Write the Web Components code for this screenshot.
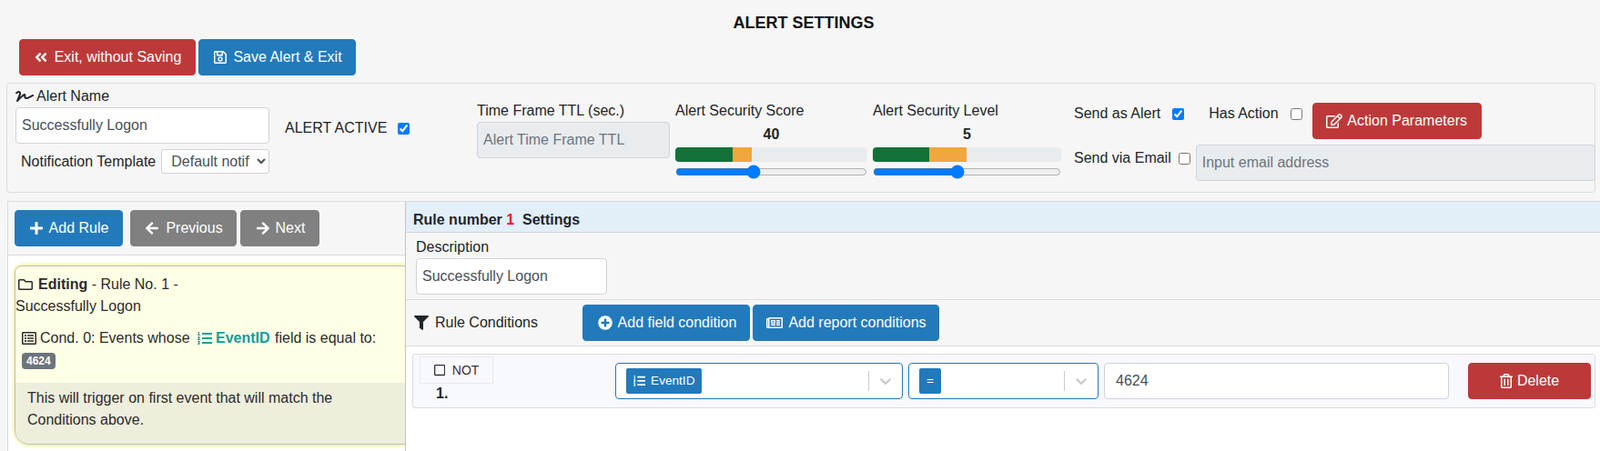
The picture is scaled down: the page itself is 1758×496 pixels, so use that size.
<!DOCTYPE html>
<html lang="en">
<head>
<meta charset="utf-8">
<title>Alert Settings</title>
<style>
html,body{margin:0;padding:0;background:#f6f6f6;}
body{font:16px/24px "Liberation Sans",Arial,sans-serif;color:#212529;width:1758px;height:496px;overflow:hidden;}
</style>
</head>
<body>
<alert-page></alert-page>

<script>
const ICONS = {
  dbl:[448,"M223.7 239l136-136c9.4-9.4 24.6-9.4 33.9 0l22.6 22.6c9.4 9.4 9.4 24.6 0 33.9L319.9 256l96.4 96.4c9.4 9.4 9.4 24.6 0 33.9L393.7 409c-9.4 9.4-24.6 9.4-33.9 0l-136-136c-9.5-9.4-9.5-24.6-.1-34zm-192 34l136 136c9.4 9.4 24.6 9.4 33.9 0l22.6-22.6c9.4-9.4 9.4-24.6 0-33.9L127.9 256l96.4-96.4c9.4-9.4 9.4-24.6 0-33.9L201.7 103c-9.4-9.4-24.6-9.4-33.9 0l-136 136c-9.5 9.4-9.5 24.6-.1 34z"],
  save:[448,"M433.941 129.941l-83.882-83.882A48 48 0 0 0 316.118 32H48C21.49 32 0 53.49 0 80v352c0 26.51 21.49 48 48 48h352c26.51 0 48-21.49 48-48V163.882a48 48 0 0 0-14.059-33.941zM272 80v80H144V80h128zm122 352H54a6 6 0 0 1-6-6V86a6 6 0 0 1 6-6h42v104c0 13.255 10.745 24 24 24h176c13.255 0 24-10.745 24-24V83.882l78.243 78.243a6 6 0 0 1 1.757 4.243V426a6 6 0 0 1-6 6zM224 232c-48.523 0-88 39.477-88 88s39.477 88 88 88 88-39.477 88-88-39.477-88-88-88zm0 128c-22.056 0-40-17.944-40-40s17.944-40 40-40 40 17.944 40 40-17.944 40-40 40z"],
  edit:[576,"M402.3 344.9l32-32c5-5 13.7-1.5 13.7 5.7V464c0 26.5-21.5 48-48 48H48c-26.5 0-48-21.5-48-48V112c0-26.5 21.5-48 48-48h273.5c7.1 0 10.7 8.6 5.7 13.7l-32 32c-1.5 1.5-3.5 2.3-5.7 2.3H48v352h352V350.5c0-2.1.8-4.1 2.3-5.6zm156.6-201.8L296.3 405.7l-90.4 10c-26.2 2.9-48.5-19.2-45.6-45.6l10-90.4L432.9 17.1c22.9-22.9 59.9-22.9 82.7 0l43.2 43.2c22.9 22.9 22.9 60 .1 82.8zM460.1 174L402 115.9 216.2 301.8l-7.3 65.3 65.3-7.3L460.1 174zm64.8-79.7l-43.2-43.2c-4.1-4.1-10.8-4.1-14.8 0L436 82l58.1 58.1 30.9-30.9c4-4.2 4-10.8-.1-14.9z"],
  plus:[448,"M416 208H272V64c0-17.67-14.33-32-32-32h-32c-17.67 0-32 14.33-32 32v144H32c-17.67 0-32 14.33-32 32v32c0 17.67 14.33 32 32 32h144v144c0 17.67 14.33 32 32 32h32c17.67 0 32-14.33 32-32V304h144c17.67 0 32-14.33 32-32v-32c0-17.67-14.33-32-32-32z"],
  left:[448,"M257.5 445.1l-22.2 22.2c-9.4 9.4-24.6 9.4-33.9 0L7 273c-9.4-9.4-9.4-24.6 0-33.9L201.4 44.7c9.4-9.4 24.6-9.4 33.9 0l22.2 22.2c9.5 9.5 9.3 25-.4 34.3L136.6 216H424c13.3 0 24 10.7 24 24v32c0 13.3-10.7 24-24 24H136.6l120.5 114.8c9.8 9.3 10 24.8.4 34.3z"],
  right:[448,"M190.5 66.9l22.2-22.2c9.4-9.4 24.6-9.4 33.9 0L441 239c9.4 9.4 9.4 24.6 0 33.9L246.6 467.3c-9.4 9.4-24.6 9.4-33.9 0l-22.2-22.2c-9.5-9.5-9.3-25 .4-34.3L311.4 296H24c-13.3 0-24-10.7-24-24v-32c0-13.3 10.7-24 24-24h287.4L190.9 101.2c-9.8-9.3-10-24.8-.4-34.3z"],
  folder:[512,"M464 128H272l-54.63-54.63c-6-6-14.14-9.37-22.63-9.37H48C21.49 64 0 85.49 0 112v288c0 26.51 21.49 48 48 48h416c26.51 0 48-21.49 48-48V176c0-26.51-21.49-48-48-48zm0 272H48V112h140.12l54.63 54.63c6 6 14.14 9.37 22.63 9.37H464v224z"],
  listalt:[512,"M464 32H48C21.49 32 0 53.49 0 80v352c0 26.51 21.49 48 48 48h416c26.51 0 48-21.49 48-48V80c0-26.51-21.49-48-48-48zm-6 400H54a6 6 0 0 1-6-6V86a6 6 0 0 1 6-6h404a6 6 0 0 1 6 6v340a6 6 0 0 1-6 6zm-42-92v24c0 6.627-5.373 12-12 12H204c-6.627 0-12-5.373-12-12v-24c0-6.627 5.373-12 12-12h200c6.627 0 12 5.373 12 12zm0-96v24c0 6.627-5.373 12-12 12H204c-6.627 0-12-5.373-12-12v-24c0-6.627 5.373-12 12-12h200c6.627 0 12 5.373 12 12zm0-96v24c0 6.627-5.373 12-12 12H204c-6.627 0-12-5.373-12-12v-24c0-6.627 5.373-12 12-12h200c6.627 0 12 5.373 12 12zm-252 12c0 19.882-16.118 36-36 36s-36-16.118-36-36 16.118-36 36-36 36 16.118 36 36zm0 96c0 19.882-16.118 36-36 36s-36-16.118-36-36 16.118-36 36-36 36 16.118 36 36zm0 96c0 19.882-16.118 36-36 36s-36-16.118-36-36 16.118-36 36-36 36 16.118 36 36z"],
  listol:[512,"M61.77 401l17.5-20.15a19.92 19.92 0 0 0 5.07-14.19v-3.31C84.34 356 80.5 352 73 352H16a8 8 0 0 0-8 8v16a8 8 0 0 0 8 8h22.83a157.41 157.41 0 0 0-11 12.31l-5.61 7c-4 5.07-5.25 10.13-2.8 14.88l1.05 1.93c3 5.76 6.29 7.88 12.25 7.88h4.73c10.33 0 15.94 2.44 15.94 9.09 0 4.72-4.2 8.22-14.36 8.22a41.54 41.54 0 0 1-15.47-3.12c-6.49-3.88-11.74-3.5-15.6 3.12l-5.59 9.31c-3.72 6.13-3.19 11.72 2.63 15.94 7.71 4.69 20.38 9.44 37 9.44 34.16 0 48.5-22.75 48.5-44.12-.03-14.38-9.12-29.76-28.73-34.88zM496 224H176a16 16 0 0 0-16 16v32a16 16 0 0 0 16 16h320a16 16 0 0 0 16-16v-32a16 16 0 0 0-16-16zm0-160H176a16 16 0 0 0-16 16v32a16 16 0 0 0 16 16h320a16 16 0 0 0 16-16V80a16 16 0 0 0-16-16zm0 320H176a16 16 0 0 0-16 16v32a16 16 0 0 0 16 16h320a16 16 0 0 0 16-16v-32a16 16 0 0 0-16-16zM16 160h64a8 8 0 0 0 8-8v-16a8 8 0 0 0-8-8H64V40a8 8 0 0 0-8-8H32a8 8 0 0 0-7.14 4.42l-8 16A8 8 0 0 0 24 64h8v64H16a8 8 0 0 0-8 8v16a8 8 0 0 0 8 8zm-3.91 160H80a8 8 0 0 0 8-8v-16a8 8 0 0 0-8-8H41.32c3.29-10.29 48.34-18.68 48.34-56.44 0-29.06-25-39.56-44.47-39.56-21.36 0-33.8 10-40.46 18.75-4.37 5.59-3 10.84 2.8 15.37l8.58 6.88c5.61 4.56 11 2.47 16.12-2.44a13.44 13.44 0 0 1 9.46-3.84c3.33 0 9.28 1.56 9.28 8.75C51 248.19 0 257.31 0 304.59v4C0 316 5.08 320 12.09 320z"],
  filter:[512,"M487.976 0H24.028C2.71 0-8.047 25.866 7.058 40.971L192 225.941V432c0 7.831 3.821 15.17 10.237 19.662l80 55.98C298.02 518.69 320 507.493 320 487.98V225.941l184.947-184.97C520.021 25.896 509.338 0 487.976 0z"],
  pluscircle:[512,"M256 8C119 8 8 119 8 256s111 248 248 248 248-111 248-248S393 8 256 8zm144 276c0 6.6-5.4 12-12 12h-92v92c0 6.6-5.4 12-12 12h-56c-6.6 0-12-5.4-12-12v-92h-92c-6.6 0-12-5.4-12-12v-56c0-6.6 5.4-12 12-12h92v-92c0-6.6 5.4-12 12-12h56c6.6 0 12 5.4 12 12v92h92c6.6 0 12 5.4 12 12v56z"],
  news:[576,"M552 64H112c-20.858 0-38.643 13.377-45.248 32H24c-13.255 0-24 10.745-24 24v272c0 30.928 25.072 56 56 56h496c13.255 0 24-10.745 24-24V88c0-13.255-10.745-24-24-24zM48 392V144h16v248c0 4.411-3.589 8-8 8s-8-3.589-8-8zm480 8H111.422c.374-2.614.578-5.283.578-8V112h416v288zM172 280h136c6.627 0 12-5.373 12-12v-96c0-6.627-5.373-12-12-12H172c-6.627 0-12 5.373-12 12v96c0 6.627 5.373 12 12 12zm28-80h80v40h-80v-40zm-40 140v-24c0-6.627 5.373-12 12-12h136c6.627 0 12 5.373 12 12v24c0 6.627-5.373 12-12 12H172c-6.627 0-12-5.373-12-12zm192 0v-24c0-6.627 5.373-12 12-12h104c6.627 0 12 5.373 12 12v24c0 6.627-5.373 12-12 12H364c-6.627 0-12-5.373-12-12zm0-144v-24c0-6.627 5.373-12 12-12h104c6.627 0 12 5.373 12 12v24c0 6.627-5.373 12-12 12H364c-6.627 0-12-5.373-12-12zm0 72v-24c0-6.627 5.373-12 12-12h104c6.627 0 12 5.373 12 12v24c0 6.627-5.373 12-12 12H364c-6.627 0-12-5.373-12-12z"],
  square:[448,"M400 32H48C21.5 32 0 53.5 0 80v352c0 26.5 21.5 48 48 48h352c26.5 0 48-21.5 48-48V80c0-26.5-21.5-48-48-48zm-6 400H54c-3.3 0-6-2.7-6-6V86c0-3.3 2.7-6 6-6h340c3.3 0 6 2.7 6 6v340c0 3.3-2.7 6-6 6z"],
  trash:[448,"M268 416h24a12 12 0 0 0 12-12V188a12 12 0 0 0-12-12h-24a12 12 0 0 0-12 12v216a12 12 0 0 0 12 12zM432 80h-82.41l-34-56.7A48 48 0 0 0 274.41 0H173.59a48 48 0 0 0-41.16 23.3L98.41 80H16A16 16 0 0 0 0 96v16a16 16 0 0 0 16 16h16v336a48 48 0 0 0 48 48h288a48 48 0 0 0 48-48V128h16a16 16 0 0 0 16-16V96a16 16 0 0 0-16-16zM171.84 50.91A6 6 0 0 1 177 48h94a6 6 0 0 1 5.15 2.91L293.61 80H154.39zM368 464H80V128h288zm-212-48h24a12 12 0 0 0 12-12V188a12 12 0 0 0-12-12h-24a12 12 0 0 0-12 12v216a12 12 0 0 0 12 12z"],
  signature:[640,"M623.2 192c-51.8 3.5-125.7 54.7-163.1 71.5-29.1 13.1-54.2 24.4-76.1 24.4-22.6 0-26-16.2-21.3-51.9 1.1-8 11.7-79.2-42.7-76.1-25.1 1.5-64.3 24.8-169.5 126L192 182.2c30.4-75.9-53.2-151.5-129.7-102.8L7.4 116.3C0 121-2.2 130.9 2.5 138.4l17.2 27c4.7 7.5 14.6 9.7 22.1 5l58-38.9c18.4-11.7 40.7 7.2 32.7 27.1L34.3 404.1C27.5 421 37 448 64 448c8.3 0 16.5-3.2 22.6-9.4 42.2-42.2 154.7-150.7 211.2-195.8-2.2 28.5-2.1 58.9 20.6 83.8 15.3 16.8 37.3 25.3 65.5 25.3 35.6 0 68-14.6 102.3-30 33-14.8 99-62.6 138.4-65.8 8.5-.7 15.2-7.3 15.2-15.8v-32.1c.2-9.1-7.5-16.8-16.6-16.2z"]
};

class Base extends HTMLElement {
  constructor(){ super(); this.attachShadow({mode:"open"}); }
  connectedCallback(){ if(!this.done){ this.done=true; this.shadowRoot.innerHTML=this.render(); } }
}

customElements.define("fa-icon", class extends Base {
  render(){
    const [w,d]=ICONS[this.getAttribute("name")];
    return `<style>:host{display:inline-flex;align-items:center;flex:none;height:1em;line-height:1}svg{height:1em;width:auto;display:block;fill:currentColor}</style>
    <svg viewBox="0 0 ${w} 512" aria-hidden="true"><path d="${d}"/></svg>`;
  }
});

customElements.define("ui-button", class extends Base {
  render(){
    const v=this.getAttribute("variant")||"blue";
    const bg={red:"#bd3939",blue:"#227abb",gray:"#808080"}[v];
    return `<style>
      :host{display:inline-flex;flex:none}
      button{display:inline-flex;align-items:center;justify-content:center;gap:var(--gap,7px);box-sizing:border-box;width:var(--w);height:40px;padding:0 0 0 var(--pl,0);margin:0;border:1px solid ${bg};border-radius:4px;background:${bg};color:#fff;font:16px/24px "Liberation Sans",Arial,sans-serif;white-space:nowrap}
    </style><button type="button"><fa-icon name="${this.getAttribute("icon")}"></fa-icon><slot></slot></button>`;
  }
});

customElements.define("text-field", class extends Base {
  render(){
    const dis=this.hasAttribute("disabled");
    const val=this.getAttribute("value");
    const ph=this.getAttribute("placeholder");
    return `<style>
      :host{display:block;flex:none}
      input{display:block;box-sizing:border-box;width:100%;height:40px;padding:0 var(--px,6px);border:1px solid #ced4da;border-radius:4px;background:${dis?"#e9ecef":"#fff"};color:#495057;font:16px "Liberation Sans",Arial,sans-serif;outline:0;margin:0}
      input::placeholder{color:#6c757d;opacity:1}
    </style><input type="text" ${dis?"disabled":""} ${val?`value="${val}"`:""} ${ph?`placeholder="${ph}"`:""}>`;
  }
});

customElements.define("check-label", class extends Base {
  render(){
    return `<style>
      :host{display:inline-flex;align-items:center;gap:var(--gap,8px);flex:none;white-space:nowrap;line-height:24px}
      input{width:13px;height:13px;margin:0;accent-color:#007bff;flex:none}
    </style><slot></slot><input type="checkbox" ${this.hasAttribute("checked")?"checked":""}>`;
  }
});

customElements.define("security-meter", class extends Base {
  render(){
    const g=this.getAttribute("good"), o=this.getAttribute("warn");
    return `<style>
      :host{display:flex;flex-direction:column;flex:none;padding-top:17px}
      .label{height:24px;line-height:24px}
      .val{height:28px;line-height:28px;font-weight:700;text-align:center}
      .bar{display:flex;height:16px;border-radius:4px;overflow:hidden;background:#e9ecef}
      .g{background:#127238;width:${g}%}
      .o{background:#f2a640;width:${o}%}
      input{display:block;width:100%;margin:3px 0 0;height:16px;accent-color:#007bff;padding:0}
    </style>
    <div class="label">${this.getAttribute("label")}</div>
    <div class="val">${this.getAttribute("value")}</div>
    <div class="bar"><div class="g"></div><div class="o"></div></div>
    <input type="range" min="${this.getAttribute("min")}" max="${this.getAttribute("max")}" value="${this.getAttribute("value")}">`;
  }
});

customElements.define("settings-panel", class extends Base {
  render(){
    return `<style>
      :host{display:flex;box-sizing:border-box;height:121px;margin:8px 5px 0 7px;border:1px solid #dcdcdc;border-radius:4px;padding:1px 0 0 9px;align-items:flex-start}
      .name{width:280px;flex:none;display:flex;flex-direction:column}
      .lbl{display:flex;align-items:center;gap:3px;height:24px;margin-top:1px}
      .lbl fa-icon{font-size:16px}
      .name text-field{width:279px}
      .tmpl{display:flex;align-items:center;margin-top:6px;padding-left:6px;height:27px}
      select{box-sizing:border-box;width:119px;height:27px;margin-left:6px;padding:0 0 0 6px;border:1px solid #ced4da;border-radius:3px;background:#fff;color:#495057;font:16px "Liberation Sans",Arial,sans-serif;flex:none}
      .active{width:227px;flex:none;box-sizing:border-box;padding:36px 0 0 16px}
      .active check-label{--gap:12px}
      .ttl{width:212px;flex:none;padding-top:17px;margin-right:6px}
      .ttl .t{height:24px}
      .m1{width:211px;margin-right:6px}
      .m2{width:207px;margin-right:14px}
      .right{flex:none;width:573px;display:flex;flex-direction:column;padding-top:20px}
      .r1{display:flex;align-items:flex-start;height:40px}
      .r1 check-label{height:24px}
      .r1 .h{margin-left:27px;--gap:13px}
      .r1 ui-button{margin-left:11px}
      .r2{display:flex;align-items:flex-start;margin-top:6px}
      .r2 check-label{--gap:8px;margin-top:3px}
      .r2 text-field{margin-left:6px;width:439px}
    </style>
    <div class="name">
      <div class="lbl"><fa-icon name="signature"></fa-icon><span>Alert Name</span></div>
      <text-field value="Successfully Logon"></text-field>
      <div class="tmpl"><span>Notification Template</span><select><option>Default notif</option></select></div>
    </div>
    <div class="active"><check-label checked>ALERT ACTIVE</check-label></div>
    <div class="ttl"><div class="t">Time Frame TTL (sec.)</div><text-field disabled placeholder="Alert Time Frame TTL"></text-field></div>
    <security-meter class="m1" label="Alert Security Score" value="40" min="0" max="100" good="30" warn="10"></security-meter>
    <security-meter class="m2" label="Alert Security Level" value="5" min="1" max="10" good="30" warn="20"></security-meter>
    <div class="right">
      <div class="r1">
        <check-label class="a" checked style="--gap:13px">Send as Alert</check-label>
        <check-label class="h">Has Action</check-label>
        <ui-button variant="red" icon="edit" style="--w:186px;--gap:5px">Action Parameters</ui-button>
      </div>
      <div class="r2">
        <check-label>Send via Email</check-label>
        <text-field disabled placeholder="Input email address"></text-field>
      </div>
    </div>`;
  }
});

customElements.define("rule-card", class extends Base {
  render(){
    return `<style>
      :host{display:block;box-sizing:border-box;width:450px;height:197px;margin:11px 0 0 7px;border:1px solid #bdbdbd;border-radius:8px 0 0 16px;background:#ffffe6;box-shadow:0 0 4px 1px #eeee88;overflow:hidden;color:#2b2b2b}
      .top{height:128px;box-sizing:border-box;padding:8px 0 0 0}
      .h{display:flex;align-items:center;height:24px;padding-left:3px;white-space:pre}
      .h fa-icon{margin-right:6px}
      .c{display:flex;align-items:center;height:24px;margin-top:11px;padding-left:7px;white-space:pre}
      .c .ic{margin-right:4px}
      .f{color:#0f9c9c;font-weight:700;display:inline-flex;align-items:center;gap:4px;margin:0 1px 0 4px}
      .badge{display:inline-block;margin:4px 0 0 7px;height:18px;line-height:18px;padding:0 5px;border-radius:4px;background:#6c757d;color:#fff;font-size:12px;font-weight:700}
      .foot{background:#eeeedd;height:68px;box-sizing:border-box;padding:5px 0 0 13px}
    </style>
    <div class="top">
      <div class="h"><fa-icon name="folder"></fa-icon><b>Editing</b> - Rule No. 1 -</div>
      <div>Successfully Logon</div>
      <div class="c"><fa-icon class="ic" name="listalt"></fa-icon>Cond. 0: Events whose <span class="f"><fa-icon name="listol"></fa-icon>EventID</span> field is equal to:</div>
      <span class="badge">4624</span>
    </div>
    <div class="foot">This will trigger on first event that will match the<br>Conditions above.</div>`;
  }
});

customElements.define("rule-list", class extends Base {
  render(){
    return `<style>
      :host{display:block;box-sizing:border-box;width:437px;flex:none;height:275px;border-left:1px solid #dcdcdc;border-top:1px solid #dcdcdc;background:#fff;overflow:hidden}
      .bar{display:flex;align-items:flex-start;box-sizing:border-box;height:59px;padding:9px 0 0 7px;background:#f6f6f6;border-bottom:1px solid #dcdcdc}
      .bar ui-button:nth-child(2){margin-left:8px}
      .bar ui-button:nth-child(3){margin-left:4px}
    </style>
    <div class="bar">
      <ui-button variant="blue" icon="plus" style="--w:119px;--gap:7px;--pl:1px">Add Rule</ui-button>
      <ui-button variant="gray" icon="left" style="--w:117px;--gap:8px;--pl:2px">Previous</ui-button>
      <ui-button variant="gray" icon="right" style="--w:87px;--gap:7px;--pl:2px">Next</ui-button>
    </div>
    <rule-card></rule-card>`;
  }
});

customElements.define("chip-select", class extends Base {
  render(){
    const ic=this.getAttribute("icon");
    return `<style>
      :host{display:flex;align-items:center;box-sizing:border-box;height:40px;flex:none;border:1px solid #227abb;border-radius:4px;background:#fff;padding:0 0 0 11px}
      .chip{display:inline-flex;align-items:center;gap:6px;height:28px;padding:0 var(--cp,7.5px);border-radius:2px;background:#227abb;color:#fff;font-size:13.6px;white-space:nowrap}
      .chip fa-icon{font-size:13.6px}
      .sp{flex:1}
      .sep{width:1px;height:22px;background:#ccc}
      svg{width:20px;height:20px;margin:0 8px;fill:#ccc;flex:none}
    </style>
    <span class="chip">${ic?`<fa-icon name="${ic}"></fa-icon>`:""}<slot></slot></span><span class="sp"></span><span class="sep"></span>
    <svg viewBox="0 0 20 20" aria-hidden="true"><path d="M4.516 7.548c.436-.446 1.043-.481 1.576 0L10 11.295l3.908-3.747c.533-.481 1.141-.446 1.574 0 .436.445.408 1.197 0 1.615-.406.418-4.695 4.502-4.695 4.502a1.095 1.095 0 0 1-1.576 0S4.924 9.581 4.516 9.163s-.436-1.17 0-1.615z"/></svg>`;
  }
});

customElements.define("condition-row", class extends Base {
  render(){
    return `<style>
      :host{display:flex;align-items:flex-start;box-sizing:border-box;height:60px;margin:8px 5px 0 7px;padding:2px 5px 0 7px;background:#f8f8ff;border:1px solid #dcdcdc;border-radius:3px}
      .no{width:215px;flex:none}
      .not{display:flex;align-items:center;justify-content:center;gap:8px;box-sizing:border-box;width:81px;height:30px;border:1px solid #e8e8ee;color:#333;font-size:14px}
      .n{font-weight:700;height:22px;line-height:22px;margin:0 0 0 18px}
      .s1{width:316px;margin:7px 6px 0 0}
      .s2{width:209px;margin:7px 6px 0 0;--cp:8px}
      text-field{width:379px;margin-top:7px;--px:12px}
      ui-button{margin:7px 0 0 21px}
    </style>
    <div class="no"><div class="not"><fa-icon name="square"></fa-icon>NOT</div><div class="n">1.</div></div>
    <chip-select class="s1" icon="listol">EventID</chip-select>
    <chip-select class="s2">=</chip-select>
    <text-field value="4624"></text-field>
    <ui-button variant="red" icon="trash" style="--w:135px;--gap:5px">Delete</ui-button>`;
  }
});

customElements.define("rule-settings", class extends Base {
  render(){
    return `<style>
      :host{display:block;flex:1;min-width:0;height:275px;box-sizing:border-box;border-left:1px solid #c4c4c4;border-top:1px solid #dcdcdc;background:#fff;overflow:hidden}
      .head{box-sizing:border-box;height:34px;padding:8px 0 0 8px;background:#e2eef8;border-bottom:1px solid #d4d4d4;font-weight:700;line-height:24px}
      .head i{font-style:normal;color:#f01030}
      .desc{box-sizing:border-box;height:74px;padding:4px 0 0 11px;background:#f6f6f6;border-bottom:1px solid #dcdcdc}
      .desc div{height:24px;line-height:24px}
      .desc text-field{width:210px}
      .cond{display:flex;align-items:center;box-sizing:border-box;height:51px;padding-left:9px;background:#f6f6f6;border-bottom:1px solid #dcdcdc}
      .cond fa-icon{margin-right:7px}
      .cond .t{width:162px;flex:none}
      .cond ui-button{margin-right:3px}
    </style>
    <div class="head">Rule number <i>1</i>&nbsp; Settings</div>
    <div class="desc"><div>Description</div><text-field value="Successfully Logon"></text-field></div>
    <div class="cond"><fa-icon name="filter"></fa-icon><span class="t">Rule Conditions</span>
      <ui-button variant="blue" icon="pluscircle" style="--w:184px;--gap:6px;--pl:2px">Add field condition</ui-button>
      <ui-button variant="blue" icon="news" style="--w:205px;--gap:6px;--pl:1px">Add report conditions</ui-button>
    </div>
    <condition-row></condition-row>`;
  }
});

customElements.define("alert-page", class extends Base {
  render(){
    return `<style>
      :host{display:block;height:496px;overflow:hidden}
      h1{margin:0;box-sizing:border-box;height:43px;padding:13px 0 0 8px;font-size:18px;line-height:24px;font-weight:700;text-align:center;color:#111}
      .tb{display:flex;gap:3px;padding-left:21px}
      .split{display:flex;margin:9px 0 0 8px}
    </style>
    <h1>ALERT SETTINGS</h1>
    <div class="tb">
      <ui-button variant="red" icon="dbl" style="--w:194px;--gap:8px;--pl:1px">Exit, without Saving</ui-button>
      <ui-button variant="blue" icon="save" style="--w:173px;--pl:2px">Save Alert &amp; Exit</ui-button>
    </div>
    <settings-panel></settings-panel>
    <div class="split"><rule-list></rule-list><rule-settings></rule-settings></div>`;
  }
});
</script>
</body>
</html>
